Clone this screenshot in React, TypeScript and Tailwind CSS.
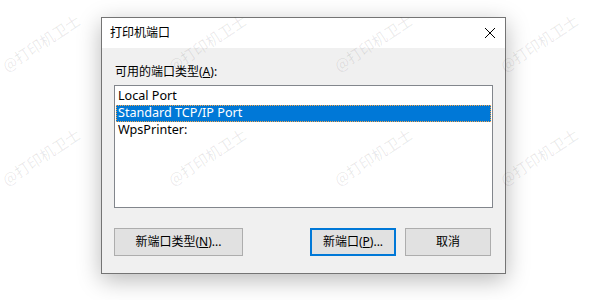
import React from 'react'

const font = 'font-["Noto_Sans","Noto_Sans_CJK_SC",sans-serif]'

// watermark slots over the page (top-left of each rotated label box)
const marks = [
  'left-[-4px] top-[31px]',
  'left-[162px] top-[31px]',
  'left-[328px] top-[31px]',
  'left-[494px] top-[31px]',
  'left-[-4px] top-[145px]',
  'left-[162px] top-[145px]',
  'left-[328px] top-[145px]',
  'left-[494px] top-[145px]',
]

const ports = ['Local Port', 'Standard TCP/IP Port', 'WpsPrinter:']

function CloseIcon() {
  return (
    <svg width="12" height="12" viewBox="0 0 12 12" className="block">
      <path d="M1 1 L11 11 M11 1 L1 11" stroke="#000" strokeWidth="1" fill="none" />
    </svg>
  )
}

export default function App() {
  return (
    <div className={`relative w-[600px] h-[300px] overflow-hidden bg-white pl-[101px] pt-[17px] ${font} text-black`}>
      <div className="w-[405px] h-[257px] flex flex-col border border-[#747474] bg-[#f0f0f0] shadow-[0_6px_22px_rgba(0,0,0,0.28)]">
        {/* title bar */}
        <div className="h-[30px] bg-white flex items-center justify-between pl-[8px] pr-[9px]">
          <span className="text-[12px] leading-none">打印机端口</span>
          <CloseIcon />
        </div>

        {/* body */}
        <div className="flex-1 flex flex-col px-[12px] pt-[16px]">
          <div className="text-[12px] leading-[16px] pl-[1px]">
            可用的端口类型(<span className="underline">A</span>):
          </div>
          <div className="mt-[5px] h-[123px] border border-[#82868c] bg-white pt-[2px] px-[1px]">
            {ports.map((p, i) => (
              <div
                key={p}
                className={`h-[17px] flex items-center pl-[2px] text-[12.6px] leading-none ${
                  i === 1 ? 'bg-[#0078d7] text-white outline outline-1 outline-dotted outline-[#f7a54a] -outline-offset-1' : ''
                }`}
              >
                {p}
              </div>
            ))}
          </div>

          <div className="mt-[20px] flex items-center">
            <button className="w-[129px] h-[28px] border border-[#adadad] bg-[#e1e1e1] text-[12px] leading-none">
              新端口类型(<span className="underline">N</span>)...
            </button>
            <button className="ml-[67px] w-[86px] h-[28px] border-2 border-[#0078d7] bg-[#e1e1e1] text-[12px] leading-none">
              新端口(<span className="underline">P</span>)...
            </button>
            <button className="ml-[9px] w-[86px] h-[28px] border border-[#adadad] bg-[#e1e1e1] text-[12px] leading-none">
              取消
            </button>
          </div>
        </div>
      </div>

      {marks.map((m) => (
        <div
          key={m}
          className={`pointer-events-none absolute ${m} w-[96px] h-[20px] -rotate-[33deg] text-[15px] leading-[20px] whitespace-nowrap text-[rgba(0,0,0,0.09)] font-["Noto_Sans_CJK_SC",sans-serif]`}
        >
          @打印机卫士
        </div>
      ))}
    </div>
  )
}
